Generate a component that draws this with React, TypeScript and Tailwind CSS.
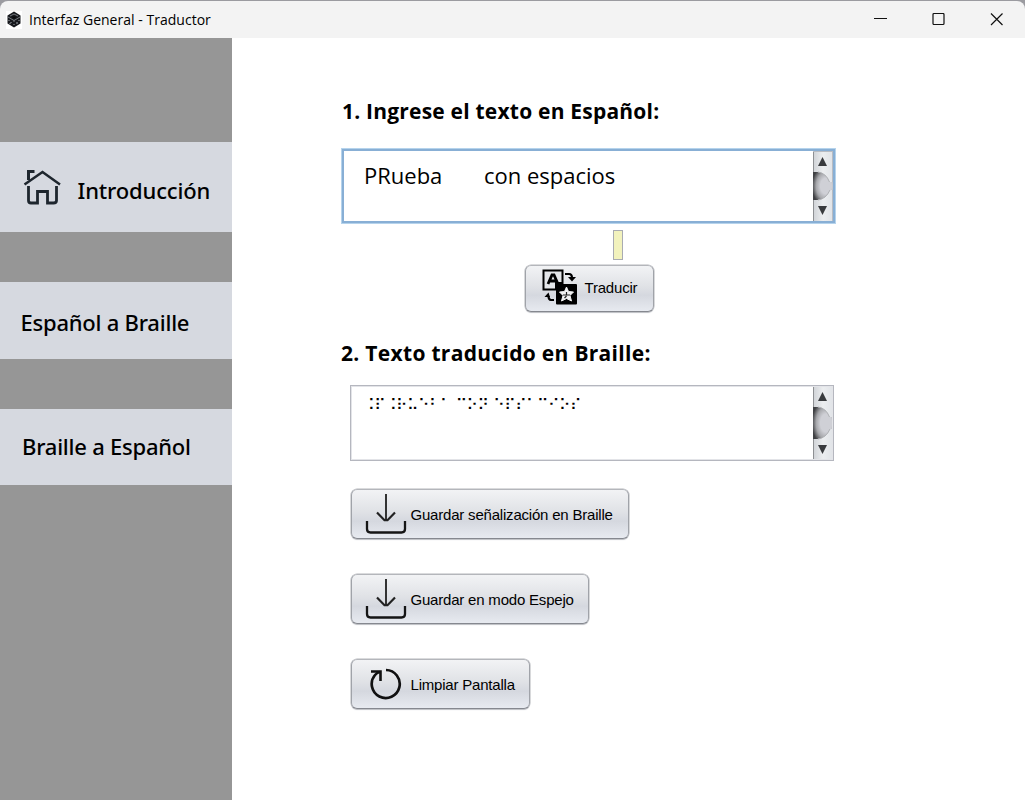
import type { ReactNode } from "react";

const buttonStyle =
  "flex items-center rounded-[6px] border-[1.5px] border-t-[#b4b6bb] border-x-[#a0a3a9] border-b-[#85888f] bg-[linear-gradient(#f2f3f5_0%,#e0e2e6_45%,#d5d8df_65%,#e7eaf0_100%)] text-[15px] leading-5 tracking-[-0.2px] whitespace-nowrap shadow-[0_0_0_0.5px_#b5b7bc,0_1px_1px_#c9cbd0]";

function ActionButton({ icon, children, className }: { icon: ReactNode; children: ReactNode; className: string }) {
  return (
    <button className={`${buttonStyle} ${className}`}>
      {icon}
      <span className="mt-[2px]">{children}</span>
    </button>
  );
}

function DownloadIcon() {
  return (
    <svg width="42" height="42" viewBox="0 0 42 42" fill="none" className="shrink-0">
      <path d="M21 1V27" stroke="#333" strokeWidth="2" />
      <path d="M12 19.500 19.500 27.200H22.500L30 19.500" stroke="#222" strokeWidth="2.200" />
      <path d="M2 28V36Q2 39.500 5.500 39.500H36.500Q40 39.500 40 36V28" stroke="#151515" strokeWidth="2.300" />
    </svg>
  );
}

function RestartIcon() {
  return (
    <svg width="32" height="32" viewBox="0 0 32 32" fill="none" stroke="#111" strokeWidth="2.700" className="shrink-0">
      <path d="M16 2A14 14 0 1 1 5 7Q7 4.500 10 4" />
      <path d="M1 3.500H10.500V13" strokeWidth="2.600" />
    </svg>
  );
}

function TranslateIcon() {
  return (
    <svg width="36" height="36" viewBox="0 0 36 36" fill="none" className="shrink-0">
      <path d="M1.500 1.500H20.500V14H14V20.500H1.500Z" fill="#e4e6e9" stroke="#000" strokeWidth="2" />
      <path d="M6 15 10 6H12L16 15M7.500 12H14.500" stroke="#000" strokeWidth="2.800" />
      <rect x="14" y="15" width="21" height="20.500" rx="1" fill="#000" />
      <path d="M24.500 18 26.500 22.500 31.500 23 28 26.500 29.500 32 24.500 29.500 19.500 32 21 26.500 17.500 23 22.500 22.500Z" fill="#f3f3f4" stroke="#f3f3f4" strokeWidth="1" />
      <path d="M24.500 23V26M21 26H28M24.500 27 22.500 29" stroke="#222" strokeWidth="1.200" />
      <path d="M23 5H27Q30 5 30 9" stroke="#000" strokeWidth="2.200" />
      <path d="M26 8H34L30 12.500Z" fill="#000" />
      <path d="M12 31H9Q6.500 31 6.500 27" stroke="#000" strokeWidth="2.200" />
      <path d="M2.500 28 6.500 23.500 8 28Z" fill="#000" />
    </svg>
  );
}

function HomeIcon() {
  return (
    <svg width="38" height="36" viewBox="0 0 38 36" fill="none" stroke="#1e262e" strokeWidth="2.500" className="shrink-0">
      <path d="M1.500 15.500 19.500 3 37 15.500" />
      <path d="M5.500 11V2.500H11.500" strokeWidth="3" />
      <path d="M5.500 17V31.500Q5.500 34 8 34H14.500V22.500H24.500V34H30.500Q33.500 34 33.500 31.500V17" strokeWidth="2.800" />
    </svg>
  );
}

function AppIcon() {
  return (
    <svg width="16" height="18" viewBox="0 0 16 18" className="shrink-0">
      <rect width="16" height="18" fill="#fff" />
      <path d="M8 .5 14.500 4.500V12.500L8 16.500 1.500 12.500V4.500Z" fill="#16181c" />
      <path d="M2 6 8 9.500 14 6M8 9.500V11M4 5 8 3 12 5" fill="none" stroke="#8d9298" strokeWidth=".8" />
      <path d="M3 9v1M5 11v1M4 12v1M11 11v2M13 9v1M8 13v1" stroke="#a4a8ad" />
      <path d="M6 5.500H10L9 7.500H7Z" fill="#08090a" />
    </svg>
  );
}

function ScrollBar({ id, height, end }: { id: string; height: number; end: number }) {
  return (
    <svg width="20" height={height} viewBox={`0 0 20 ${height}`} className="shrink-0">
      <defs>
        <linearGradient id={`${id}-track`}>
          <stop offset="0" stopColor="#cfd2d6" />
          <stop offset=".5" stopColor="#eceef0" />
          <stop offset="1" stopColor="#e0e3e7" />
        </linearGradient>
        <radialGradient id={`${id}-thumb`} cx=".65" cy=".5" r=".7">
          <stop offset=".4" stopColor="#cfd0d6" />
          <stop offset=".7" stopColor="#a6a7ab" />
          <stop offset="1" stopColor="#404144" />
        </radialGradient>
      </defs>
      <rect width="20" height={height} fill={`url(#${id}-track)`} />
      <path d={`M.5 0V${height}`} stroke="#8e9093" />
      <path d="M0 .5H20M19.500 0V80" stroke="#b9bcc2" fill="none" />
      <path d={`M0 21H5Q13 22 16.500 31H20V${end - 10}H17Q13 ${end - 1} 5 ${end}H0Z`} fill={`url(#${id}-thumb)`} />
      <path d={`M5 21Q13 22 16.500 31M17 ${end - 10}Q13 ${end - 1} 5 ${end}`} fill="none" stroke="#aeb0b4" />
      <path d="M9.500 6 14 15H5Z" fill="#393b3e" />
      <path d={`M9.500 ${height - 6} 14 ${height - 15}H5Z`} fill="#393b3e" />
    </svg>
  );
}

export default function App() {
  return (
    <div className="flex h-[800px] w-[1025px] flex-col overflow-hidden bg-[#9b9ba0] font-['Liberation_Sans',sans-serif] text-black">
      <header className="mt-px flex h-[37px] shrink-0 items-center rounded-t-lg bg-[#f3f3f3] pl-1.5">
        <AppIcon />
        <span className="ml-[7px] font-['Open_Sans',sans-serif] text-[14px] tracking-[0.02px]">Interfaz General - Traductor</span>
        <div className="mr-[22px] ml-auto flex items-center gap-[45px]">
          <svg width="13" height="13" fill="none" stroke="#111"><path d="M0 5.500H13" /></svg>
          <svg width="13" height="13" fill="none" stroke="#111" strokeWidth="1.200"><rect x="1" y=".5" width="11" height="11" rx="1" /></svg>
          <svg width="13" height="13" fill="none" stroke="#111" strokeWidth="1.200"><path d="M1 .5 12.500 12M12.500 .5 1 12" /></svg>
        </div>
      </header>
      <div className="flex min-h-0 flex-1 bg-white">
        <nav className="flex w-[232px] shrink-0 flex-col bg-[#969696] pt-[104px] font-['Noto_Sans',sans-serif] text-[22px] leading-[30px] font-medium tracking-[-0.23px] whitespace-nowrap">
          <a className="flex h-[90px] items-center bg-[#d6d9e0] pl-[23px]">
            <HomeIcon />
            <span className="mt-[6px] ml-[16.500px] tracking-[-0.15px]">Introducción</span>
          </a>
          <a className="mt-[50px] flex h-[77px] items-center bg-[#d6d9e0] pt-[3px] pl-[20.500px]">Español a Braille</a>
          <a className="mt-[50px] flex h-[76px] items-center bg-[#d6d9e0] pb-[2px] pl-[22px]">Braille a Español</a>
        </nav>
        <main className="flex flex-1 flex-col items-start pl-[109px]">
          <h1 className="mt-[58px] ml-px h-[30px] font-['Open_Sans',sans-serif] text-[21px] leading-[30px] font-bold tracking-[0.21px] whitespace-nowrap">1. Ingrese el texto en Español:</h1>
          <div className="mt-[22px] flex h-[76px] w-[495px] justify-between border-[3px] border-[#88afd5] bg-white outline-1 -outline-offset-1 outline-[#b5d3ec]">
            <p className="pt-[9px] pl-[20px] font-['Open_Sans',sans-serif] text-[22px] leading-[30px] whitespace-pre"><span className="inline-block w-[120px]">PRueba </span>con espacios</p>
            <ScrollBar id="source" height={70} end={49} />
          </div>
          <div className="mt-[6px] ml-[272px] h-[30px] w-[10px] border border-[#a9abb2] bg-[#f2f2bd]" />
          <ActionButton icon={<TranslateIcon />} className="mt-[5px] ml-[183.500px] h-[46.500px] w-[129px] gap-[7px] pb-[2px] pl-[16px]">Traducir</ActionButton>
          <h2 className="mt-[26.500px] h-[30px] font-['Open_Sans',sans-serif] text-[21px] leading-[30px] font-bold tracking-[0.3px] whitespace-nowrap">2. Texto traducido en Braille:</h2>
          <div className="mt-[17px] ml-[9px] flex h-[76px] w-[484px] justify-between border border-[#b5b7bf] bg-white outline-1 -outline-offset-2 outline-[#e3e4e8]">
            <p className="pt-[9px] pl-[12.500px] font-['DejaVu_Sans',sans-serif] text-[15px] leading-[20px] tracking-[-0.03px] whitespace-nowrap">⠨⠏⠨⠗⠥⠑⠃⠁ ⠉⠕⠝ ⠑⠏⠎⠁⠉⠊⠕⠎</p>
            <ScrollBar id="braille" height={74} end={53} />
          </div>
          <ActionButton icon={<DownloadIcon />} className="mt-[27.500px] ml-[9.500px] h-[50.500px] w-[278px] gap-[4px] pt-px pl-[13px]">Guardar señalización en Braille</ActionButton>
          <ActionButton icon={<DownloadIcon />} className="mt-[34.500px] ml-[9.500px] h-[50.500px] w-[238px] gap-[4px] pt-px pl-[13px]">Guardar en modo Espejo</ActionButton>
          <ActionButton icon={<RestartIcon />} className="mt-[34.500px] ml-[9.500px] h-[50.500px] w-[179px] gap-[9px] pt-px pl-[18px]">Limpiar Pantalla</ActionButton>
        </main>
      </div>
    </div>
  );
}
